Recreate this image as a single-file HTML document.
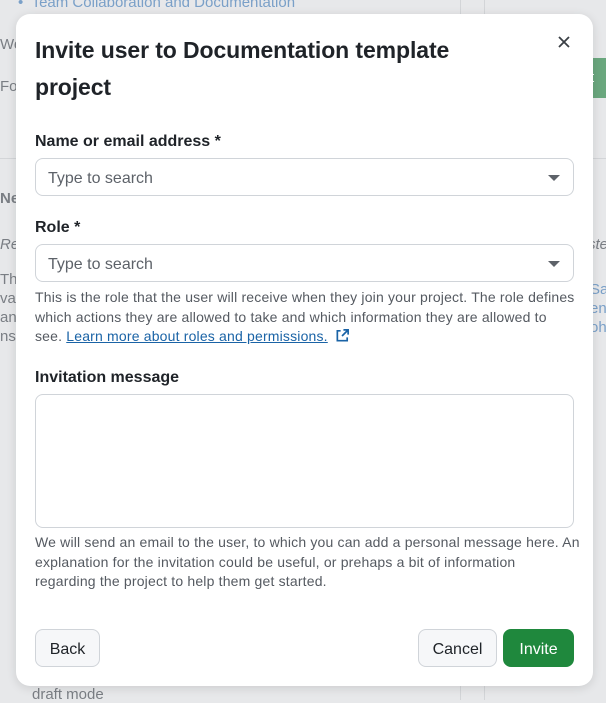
<!DOCTYPE html>
<html><head><style>
*{box-sizing:border-box;margin:0;padding:0}
body{width:606px;height:700px;overflow:hidden;background:#e7e8ea;font-family:"Liberation Sans",sans-serif;position:relative;color:#1f2328}
.bg{position:absolute;color:#7a7e84;font-size:15px}
.modal{position:absolute;left:16px;top:14px;width:577px;height:672px;background:#fff;border-radius:14px;box-shadow:0 2px 10px rgba(0,0,0,.12)}
.abs{position:absolute}
h1{position:absolute;left:19px;top:18px;font-size:23px;font-weight:bold;line-height:37px;color:#1f2328;width:460px;letter-spacing:-.1px}
.lbl{position:absolute;left:19px;font-size:16px;font-weight:bold;color:#1f2328}
.inp{position:absolute;left:19px;width:539px;height:38px;border:1px solid #d0d4d9;border-radius:8px;font-size:16px;color:#5d6269;padding:11px 12px}
.inp .car{position:absolute;right:13px;top:16px;width:0;height:0;border-left:6px solid transparent;border-right:6px solid transparent;border-top:6px solid #5d6269}
.help{position:absolute;left:19px;width:580px;white-space:nowrap;font-size:14px;letter-spacing:.18px;line-height:19.5px;color:#555a61}
.help a{color:#1a63a6;text-decoration:underline}
.btn{position:absolute;top:615px;height:38px;border:1px solid #d0d4d9;border-radius:8px;background:#f6f7f9;font-size:16px;color:#1f2328;text-align:center;line-height:40px}
</style></head><body>
<div class="bg" style="left:18px;top:-6px;color:#7aa0c8">•&nbsp;&nbsp;Team Collaboration and Documentation</div>
<div class="bg" style="left:0;top:36px">We</div>
<div class="bg" style="left:0;top:78px">For</div>
<div class="bg" style="left:0;top:190px;font-weight:bold">Ne</div>
<div class="bg" style="left:0;top:236px;font-style:italic">Rec</div>
<div class="bg" style="left:0;top:270px;line-height:19px">The<br>var<br>and<br>ns:</div>
<div class="bg" style="left:588px;top:236px;font-style:italic">ste</div>
<div class="bg" style="left:590px;top:280px;color:#7aa0c8;line-height:19px">Sa<br>en<br>oh</div>
<div class="bg" style="left:32px;top:686px">draft mode</div>
<div class="abs" style="left:460px;top:0;width:1px;height:700px;background:#d3d5d8"></div>
<div class="abs" style="left:484px;top:0;width:1px;height:700px;background:#d3d5d8"></div>
<div class="abs" style="left:0;top:158px;width:606px;height:1px;background:#d3d5d8"></div>
<div class="abs" style="left:590px;top:58px;width:16px;height:40px;background:#6aa77e;color:#fff;font-size:15px;line-height:40px">t</div>
<div class="modal">
<h1>Invite user to Documentation template project</h1>
<svg class="abs" style="left:541px;top:21px" width="14" height="14" viewBox="0 0 14 14"><path d="M2 2L12 12M12 2L2 12" stroke="#3a3f45" stroke-width="1.8"/></svg>
<div class="lbl" style="top:119px">Name or email address *</div>
<div class="inp" style="top:144px">Type to search<span class="car"></span></div>
<div class="lbl" style="top:205px">Role *</div>
<div class="inp" style="top:230px">Type to search<span class="car"></span></div>
<div class="help" style="top:274px">This is the role that the user will receive when they join your project. The role defines<br>which actions they are allowed to take and which information they are allowed to<br>see. <a>Learn more about roles and permissions.</a> <svg width="15" height="15" viewBox="0 0 16 16" style="vertical-align:-2px;margin-left:3px"><path d="M6 3H2.5V13.5H13V10M9 2H14V7M14 2L7.5 8.5" fill="none" stroke="#1a63a6" stroke-width="1.8"/></svg></div>
<div class="lbl" style="top:355px">Invitation message</div>
<div class="inp" style="top:380px;height:134px"></div>
<div class="help" style="top:519px">We will send an email to the user, to which you can add a personal message here. An<br>explanation for the invitation could be useful, or prehaps a bit of information<br>regarding the project to help them get started.</div>
<div class="btn" style="left:19px;width:65px">Back</div>
<div class="btn" style="left:402px;width:79px">Cancel</div>
<div class="btn" style="left:487px;width:71px;background:#1f883d;border-color:#1f883d;color:#fff">Invite</div>
</div>
</body></html>
